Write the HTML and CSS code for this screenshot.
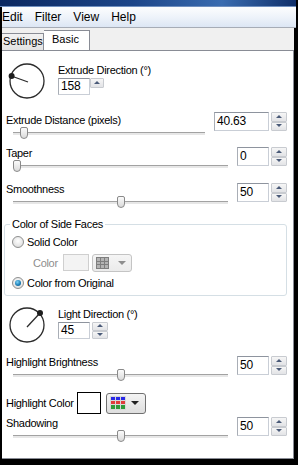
FILE: index.html
```html
<!DOCTYPE html>
<html>
<head>
<meta charset="utf-8">
<link rel="stylesheet" href="styles.css">
</head>
<body>
<div class="window">
  <div class="titlebar"></div>
  <div class="menubar">
    <span class="menu">Edit</span>
    <span class="menu">Filter</span>
    <span class="menu">View</span>
    <span class="menu">Help</span>
  </div>
  <div class="tabstrip">
    <div class="tab">Settings</div>
    <div class="tab active">Basic</div>
  </div>
  <div class="panel">
    <div class="dial-row dial-row-1">
      <svg class="dial" width="38" height="38" viewBox="0 0 38 38">
        <circle cx="19" cy="19" r="17" fill="none" stroke="#2b2b2b" stroke-width="1.3"/>
        <line x1="20" y1="20" x2="3.4" y2="14" stroke="#2b2b2b" stroke-width="1.3"/>
        <circle cx="3.6" cy="14" r="3" fill="#1e1e1e"/>
      </svg>
      <div class="dial-col">
        <div class="label">Extrude Direction (°)</div>
        <div class="spin spin-dial">
          <div class="spin-input">158</div>
          <div class="spin-btns single"><span class="btn up"></span></div>
        </div>
      </div>
    </div>

    <div class="slider slider-distance">
      <div class="slider-left">
        <div class="label">Extrude Distance (pixels)</div>
        <div class="track-row"><div class="track"></div><div class="thumb" style="left:7px"></div></div>
      </div>
      <div class="spin spin-wide">
        <div class="spin-input">40.63</div>
        <div class="spin-btns"><span class="btn up"></span><span class="btn down"></span></div>
      </div>
    </div>

    <div class="slider slider-taper">
      <div class="slider-left">
        <div class="label">Taper</div>
        <div class="track-row"><div class="track"></div><div class="thumb" style="left:0px"></div></div>
      </div>
      <div class="spin">
        <div class="spin-input">0</div>
        <div class="spin-btns"><span class="btn up"></span><span class="btn down"></span></div>
      </div>
    </div>

    <div class="slider slider-smooth">
      <div class="slider-left">
        <div class="label">Smoothness</div>
        <div class="track-row"><div class="track"></div><div class="thumb" style="left:104px"></div></div>
      </div>
      <div class="spin">
        <div class="spin-input">50</div>
        <div class="spin-btns"><span class="btn up"></span><span class="btn down"></span></div>
      </div>
    </div>

    <fieldset class="group">
      <legend>Color of Side Faces</legend>
      <div class="radio-row radio-row-1"><span class="radio"></span><span class="label">Solid Color</span></div>
      <div class="color-row">
        <span class="label disabled">Color</span>
        <span class="swatch swatch-disabled"></span>
        <span class="dropdown dropdown-disabled">
          <svg width="13" height="12" viewBox="0 0 13 12">
            <rect x="0" y="0" width="13" height="12" fill="#7f7f7f"/>
            <g fill="#b4b4b4">
              <rect x="1" y="1" width="3" height="3"/><rect x="5" y="1" width="3" height="3"/><rect x="9" y="1" width="3" height="3"/>
              <rect x="1" y="5" width="3" height="2"/><rect x="5" y="5" width="3" height="2"/><rect x="9" y="5" width="3" height="2"/>
              <rect x="1" y="8" width="3" height="3"/><rect x="5" y="8" width="3" height="3"/><rect x="9" y="8" width="3" height="3"/>
            </g>
          </svg>
          <span class="caret caret-disabled"></span>
        </span>
      </div>
      <div class="radio-row radio-row-2"><span class="radio checked"></span><span class="label">Color from Original</span></div>
    </fieldset>

    <div class="dial-row dial-row-2">
      <svg class="dial" width="38" height="38" viewBox="0 0 38 38">
        <circle cx="19" cy="19" r="17" fill="none" stroke="#2b2b2b" stroke-width="1.3"/>
        <line x1="19" y1="21" x2="32" y2="7" stroke="#2b2b2b" stroke-width="1.3"/>
        <circle cx="32" cy="7" r="3" fill="#1e1e1e"/>
      </svg>
      <div class="dial-col">
        <div class="label">Light Direction (°)</div>
        <div class="spin spin-dial">
          <div class="spin-input">45</div>
          <div class="spin-btns"><span class="btn up"></span><span class="btn down"></span></div>
        </div>
      </div>
    </div>

    <div class="slider slider-bright">
      <div class="slider-left">
        <div class="label">Highlight Brightness</div>
        <div class="track-row"><div class="track"></div><div class="thumb" style="left:104px"></div></div>
      </div>
      <div class="spin">
        <div class="spin-input">50</div>
        <div class="spin-btns"><span class="btn up"></span><span class="btn down"></span></div>
      </div>
    </div>

    <div class="hl-row">
      <span class="label">Highlight Color</span>
      <span class="swatch swatch-white"></span>
      <span class="dropdown">
        <svg width="16" height="14" viewBox="0 0 16 14">
          <rect x="0" y="0" width="16" height="14" fill="#d8d8d8"/>
          <g fill="#2a2ae8"><rect x="1" y="1" width="4" height="3"/><rect x="6" y="1" width="4" height="3"/><rect x="11" y="1" width="4" height="3"/></g>
          <g fill="#e03b3b"><rect x="1" y="5" width="4" height="3"/><rect x="6" y="5" width="4" height="3"/><rect x="11" y="5" width="4" height="3"/></g>
          <g fill="#2f9a3a"><rect x="1" y="9" width="4" height="4"/><rect x="6" y="9" width="4" height="4"/><rect x="11" y="9" width="4" height="4"/></g>
        </svg>
        <span class="caret"></span>
      </span>
    </div>

    <div class="slider slider-shadow">
      <div class="slider-left">
        <div class="label">Shadowing</div>
        <div class="track-row"><div class="track"></div><div class="thumb" style="left:104px"></div></div>
      </div>
      <div class="spin">
        <div class="spin-input">50</div>
        <div class="spin-btns"><span class="btn up"></span><span class="btn down"></span></div>
      </div>
    </div>
  </div>
</div>
</body>
</html>
```
FILE: styles.css
```css
html, body {
  margin: 0;
  padding: 0;
}
body {
  background: #000;
  width: 298px;
  height: 465px;
  overflow: hidden;
  font-family: "Liberation Sans", Arial, sans-serif;
  color: #000;
}
.window {
  margin-left: 2px;
  width: 292px;
  background: #f0f0f0;
}
.titlebar {
  height: 7px;
  background: linear-gradient(to right, #0b2860 0%, #1d4689 45%, #3a6cb0 75%, #0f2f6a 100%);
  border-bottom: 1px solid #6f8fbf;
  box-sizing: border-box;
  margin-left: -2px;
  margin-right: -2px;
  width: 296px;
}
.menubar {
  height: 20px;
  width: 294px;
  display: flex;
  align-items: center;
  gap: 12px;
  overflow: hidden;
  font-size: 12px;
  background: linear-gradient(to bottom, #fcfdfe 0%, #eef3fa 50%, #dce6f4 100%);
  border-bottom: 1px solid #a6acb6;
}
.tabstrip {
  height: 22px;
  display: flex;
  align-items: flex-end;
  overflow: hidden;
  font-size: 11px;
}
.tab {
  box-sizing: border-box;
  height: 17px;
  line-height: 15px;
  border: 1px solid #898c95;
  border-left: none;
  border-bottom: none;
  background: linear-gradient(to bottom, #f2f2f2, #e3e3e3);
  padding: 0 0 0 1px;
  width: 42px;
}
.tab.active {
  height: 21px;
  width: 46px;
  background: #fff;
  padding-left: 8px;
  line-height: 17px;
  position: relative;
  top: 1px;
}
.panel {
  box-sizing: border-box;
  height: 409px;
  background: #fff;
  border-top: 1px solid #898c95;
  border-right: 1px solid #898c95;
  border-bottom: 1px solid #898c95;
  padding: 0 6px 0 2px;
  display: flex;
  flex-direction: column;
  font-size: 11px;
  letter-spacing: -0.3px;
}
.label {
  line-height: 14px;
  white-space: nowrap;
}
.label.disabled {
  color: #8d8d8d;
}

/* dials */
.dial-row {
  display: flex;
  height: 38px;
}
.dial-row-1 { margin-top: 11px; }
.dial-row-2 { margin-top: 10px; }
.dial {
  margin-left: 4px;
  flex: none;
}
.dial-col {
  margin-left: 12px;
  display: flex;
  flex-direction: column;
}
.dial-col .label {
  margin-top: 1px;
}
.dial-col .spin {
  margin-top: 1px;
}

/* spin boxes */
.spin {
  display: flex;
  gap: 2px;
  height: 19px;
  flex: none;
}
.spin-input {
  box-sizing: border-box;
  width: 32px;
  height: 19px;
  border: 1px solid #c9ced6;
  border-top-color: #8e949e;
  border-left-color: #a9aeb6;
  background: #fff;
  font-size: 12px;
  letter-spacing: -0.2px;
  line-height: 17px;
  padding-left: 2px;
}
.spin-wide .spin-input {
  width: 55px;
}
.spin-dial {
  height: 17px;
}
.spin-dial .spin-input {
  height: 17px;
  line-height: 15px;
}
.spin-btns {
  width: 16px;
  display: flex;
  flex-direction: column;
}
.spin-btns.single {
  width: 14px;
  height: 10px;
  margin-left: -2px;
}
.btn {
  flex: 1;
  box-sizing: border-box;
  border: 1px solid #c8cbd0;
  background: linear-gradient(to bottom, #f6f6f6, #e2e3e6);
  position: relative;
  border-radius: 1px;
}
.btn::after {
  content: "";
  position: absolute;
  left: 50%;
  top: 50%;
  margin-left: -3px;
  margin-top: -2px;
  border-left: 3px solid transparent;
  border-right: 3px solid transparent;
}
.btn.up::after {
  border-bottom: 3px solid #4a5a78;
}
.btn.down::after {
  border-top: 3px solid #4a5a78;
}

/* sliders */
.slider {
  display: flex;
  align-items: flex-start;
  margin-left: 2px;
}
.slider-left {
  flex: 1;
  display: flex;
  flex-direction: column;
}
.slider .spin {
  margin-top: 1px;
}
.slider-distance { margin-top: 13px; }
.slider-distance .spin { margin-top: -1px; }
.slider-taper { margin-top: 5px; }
.slider-smooth { margin-top: 8px; }
.slider-bright { margin-top: 11px; }
.slider-shadow { margin-top: 2px; }
.track-row {
  position: relative;
  height: 14px;
  margin-left: 7px;
  margin-right: 9px;
}
.track {
  position: absolute;
  left: 0;
  right: 0;
  top: 5px;
  height: 2px;
  background: #e7e7e7;
  border-top: 1px solid #a2a2a2;
}
.thumb {
  position: absolute;
  top: 0;
  box-sizing: border-box;
  width: 8px;
  height: 12px;
  border: 1px solid #8a8a8a;
  border-radius: 2px 2px 4px 4px;
  background: linear-gradient(to bottom, #fbfbfb, #dadada);
}

/* group box */
.group {
  margin: 7px 0 0 0;
  padding: 4px 0 5px 7px;
  border: 1px solid #d5dfe5;
  border-radius: 3px;
}
.group legend {
  padding: 0 2px;
  margin-left: -2px;
  line-height: 14px;
}
.radio-row {
  display: flex;
  align-items: center;
  gap: 3px;
  height: 14px;
}
.radio-row-2 { margin-top: 5px; }
.radio {
  box-sizing: border-box;
  width: 12px;
  height: 12px;
  border-radius: 50%;
  border: 1px solid #8e8f8f;
  background: radial-gradient(circle at 50% 40%, #ffffff 0%, #e6e6e6 60%, #cfcfcf 100%);
  position: relative;
}
.radio.checked::after {
  content: "";
  position: absolute;
  left: 2px;
  top: 2px;
  width: 6px;
  height: 6px;
  border-radius: 50%;
  background: radial-gradient(circle at 40% 35%, #7fd2f5 0%, #1b7fb8 55%, #0d4f7c 100%);
}
.color-row {
  display: flex;
  align-items: center;
  margin-top: 5px;
  margin-left: 21px;
  height: 17px;
}
.swatch {
  box-sizing: border-box;
  display: inline-block;
}
.swatch-disabled {
  width: 26px;
  height: 17px;
  border: 1px solid #cfcfcf;
  background: #f3f3f3;
  margin-left: 5px;
}
.dropdown {
  box-sizing: border-box;
  display: flex;
  align-items: center;
  border: 1px solid #a8a8a8;
  border-radius: 3px;
  background: linear-gradient(to bottom, #f4f4f4, #dedede);
  position: relative;
}
.dropdown-disabled {
  width: 40px;
  height: 18px;
  margin-left: 3px;
  border-color: #c4c4c4;
  background: linear-gradient(to bottom, #f5f5f5, #ebebeb);
  padding-left: 3px;
}
.caret {
  position: absolute;
  right: 6px;
  top: 50%;
  margin-top: -2px;
  border-left: 4px solid transparent;
  border-right: 4px solid transparent;
  border-top: 4px solid #222;
}
.caret-disabled {
  border-top-color: #8d8d8d;
  right: 5px;
}

/* highlight color row */
.hl-row {
  display: flex;
  align-items: center;
  margin-top: 9px;
  margin-left: 2px;
  height: 22px;
}
.swatch-white {
  width: 24px;
  height: 22px;
  border: 1px solid #000;
  background: #fff;
  margin-left: 3px;
}
.hl-row .dropdown {
  width: 40px;
  height: 21px;
  margin-left: 5px;
  border-color: #707070;
  padding-left: 3px;
}
```
